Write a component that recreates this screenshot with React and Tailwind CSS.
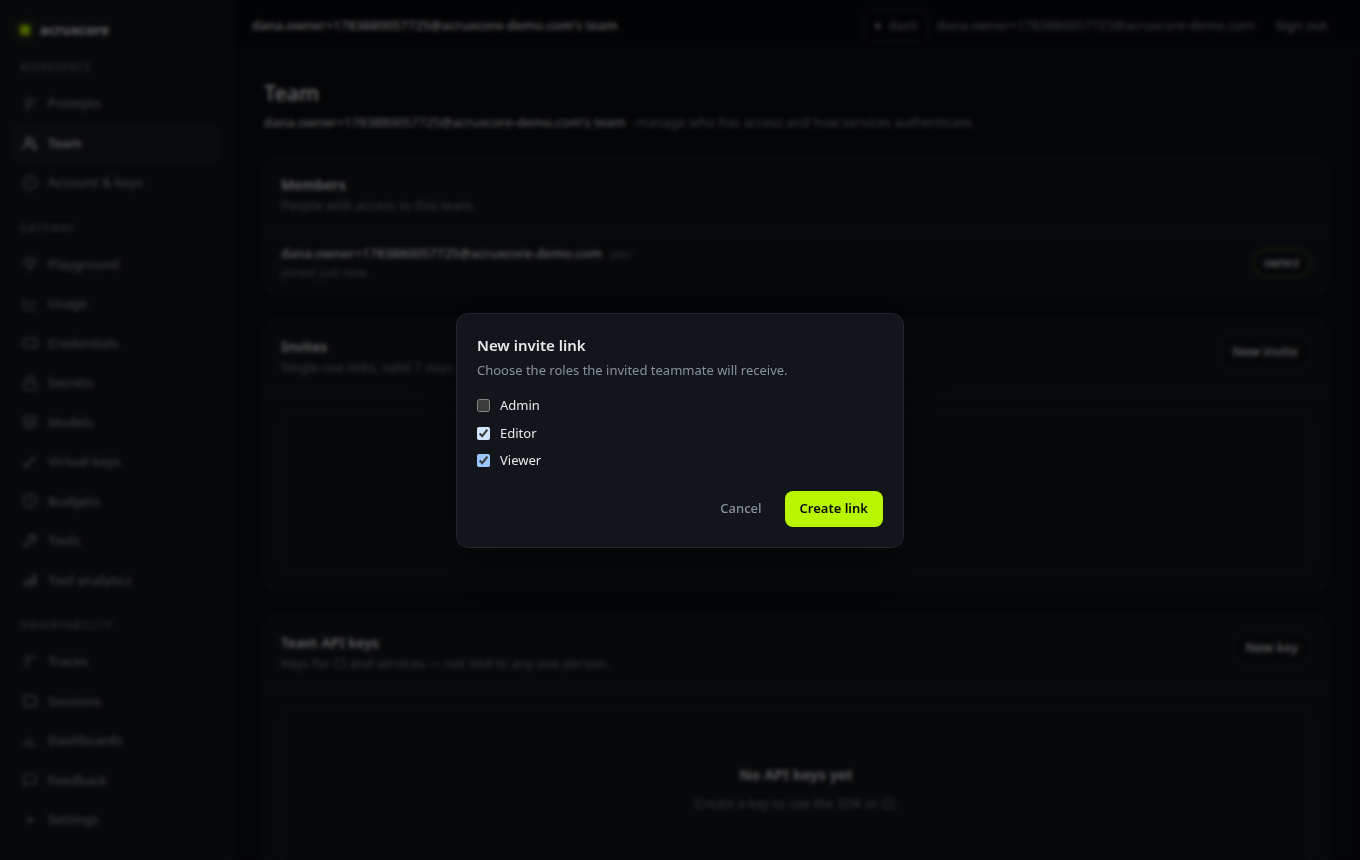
import {
  LuCircleCheck, LuGem, LuChartLine, LuLock, LuLayers, LuClock4, LuWrench, LuMessageSquare,
} from "react-icons/lu";

function Icon({ children }) {
  return (
    <svg className="size-4 shrink-0" viewBox="0 0 16 16" fill="none" stroke="currentColor" strokeWidth="1.3" strokeLinecap="round" strokeLinejoin="round">
      {children}
    </svg>
  );
}

const lucide = "size-4 shrink-0 stroke-[1.8]";

const sections = [
  {
    title: "Workspace",
    items: [
      { name: "Prompts", icon: <Icon><path d="M3 3.500h10M3 8h9M3 12.500h5" /></Icon> },
      { name: "Team", active: true, icon: <Icon><circle cx="6" cy="5" r="2.300" /><path d="M1.500 14c0-3 2-4.500 4.500-4.500s4.500 1.500 4.500 4.500M11.500 2.700v6.300M12 10c1.500.5 2.500 2 2.500 4h-2" /></Icon> },
      { name: "Account & keys", icon: <LuCircleCheck className={lucide} /> },
    ],
  },
  {
    title: "Gateway",
    items: [
      { name: "Playground", icon: <LuGem className="size-4 shrink-0 stroke-[1.2]" /> },
      { name: "Usage", icon: <LuChartLine className={lucide} /> },
      { name: "Credentials", icon: <Icon><rect x="1" y="4" width="14" height="8" rx="2" /></Icon> },
      { name: "Secrets", icon: <LuLock className={lucide} /> },
      { name: "Models", icon: <LuLayers className={lucide} /> },
      { name: "Virtual keys", icon: <Icon><circle cx="4.500" cy="11.500" r="1.800" /><path d="M6 10l6.500-6.500M10 4l3 2.500" /></Icon> },
      { name: "Budgets", icon: <LuClock4 className={lucide} /> },
      { name: "Tools", icon: <LuWrench className={lucide} /> },
      { name: "Tool analytics", icon: <Icon><path d="M3.500 13v-3M8 13V7M12.500 13V3" strokeWidth="2.600" /></Icon> },
    ],
  },
  {
    title: "Observability",
    items: [
      { name: "Traces", icon: <Icon><path d="M3 3.500h10M3 8h5M3 12.500h3" /></Icon> },
      { name: "Sessions", icon: <Icon><rect x="2" y="3" width="12" height="10" rx="1" /></Icon> },
      { name: "Dashboards", icon: <Icon><path d="M2.500 13V9M6.500 13V5M10 13V8M12 13h1" /></Icon> },
      { name: "Feedback", icon: <LuMessageSquare className={lucide} /> },
      { name: "Settings", icon: <Icon><circle cx="8" cy="8" r="2" /></Icon> },
    ],
  },
];

const roles = [
  { name: "Admin", checked: false, accent: "" },
  { name: "Editor", checked: true, accent: "accent-[#d1e6ff]" },
  { name: "Viewer", checked: true, accent: "accent-[#99c8ff]" },
];

function Sidebar() {
  return (
    <aside className="w-[232px] shrink-0 border-r border-[#1f242c] bg-[#12161c] px-3 pt-[19px]">
      <div className="flex items-center gap-2.5 px-2 pb-px text-sm leading-normal font-bold">
        <span className="size-2.5 rounded-xs bg-[#b8f500] shadow-[0_0_12px_#b8f50080]" />
        acruxcore
      </div>
      {sections.map((section) => (
        <nav key={section.title} className="pt-[19px]" aria-label={section.title}>
          <div className="mb-2.5 px-2 text-[10px] leading-[15px] font-medium tracking-[0.14em] text-[#6b7280] uppercase">
            {section.title}
          </div>
          <div className="flex flex-col gap-0.5">
            {section.items.map((item) => (
              <a
                key={item.name}
                href="#"
                className={`flex items-center gap-2.5 rounded-lg px-2.5 py-[9px] text-[13px] leading-normal font-medium ${
                  item.active ? "bg-[#191d24] text-[#e6e8eb]" : "text-[#8a919e]"
                }`}
              >
                {item.icon}
                {item.name}
              </a>
            ))}
          </div>
        </nav>
      ))}
    </aside>
  );
}

function Topbar() {
  return (
    <header className="flex h-[52px] items-center justify-between border-b border-[#1f242c] bg-[#07090e] px-5">
      <span className="font-medium">dana.owner+1783880057725@acruxcore-demo.com's team</span>
      <div className="flex items-center gap-2">
        <button className="flex h-8 items-center gap-2 rounded-lg border border-[#272d37] px-2.5 font-['Noto_Sans_Mono','DejaVu_Sans_Mono',monospace] text-xs text-[#8a919e]">
          <span className="size-1.5 rounded-full bg-[#7d8490]" />
          dark
        </button>
        <span className="text-[#8a919e]">dana.owner+1783880057725@acruxcore-demo.com</span>
        <button className="h-8 rounded-lg px-[13px] font-medium text-[#8a919e]">Sign out</button>
      </div>
    </header>
  );
}

function Card({ title, text, action, children }) {
  return (
    <section className="rounded-xl border border-[#1f242c] bg-[#12161c]">
      <div className="flex items-start justify-between border-b border-[#1f242c] p-4">
        <div>
          <h2 className="text-sm leading-normal font-semibold">{title}</h2>
          <p className="mt-px leading-[19px] text-[#7d8490]">{text}</p>
        </div>
        {action && (
          <button className="h-8 rounded-lg border border-[#1f242c] bg-[#0f1318] px-3 font-medium">{action}</button>
        )}
      </div>
      {children}
    </section>
  );
}

function Empty({ title, text }) {
  return (
    <div className="p-4">
      <div className="flex flex-col items-center gap-2 rounded-xl border border-dashed border-[#272d37] py-14">
        <h3 className="text-[15px] leading-normal font-semibold">{title}</h3>
        <p className="text-[#7d8490]">{text}</p>
      </div>
    </div>
  );
}

function InviteDialog() {
  return (
    <div className="fixed inset-0 flex items-center justify-center bg-black/60 backdrop-blur-[2px]">
      <form
        role="dialog"
        aria-labelledby="invite-title"
        className="w-full max-w-md rounded-xl border border-[#1f2630] bg-[#12161a] p-5 shadow-[0_20px_60px_rgba(0,0,0,0.5)]"
      >
        <h2 id="invite-title" className="text-[15px] leading-normal font-semibold">New invite link</h2>
        <p className="mt-1 leading-5 text-[#8a919e]">Choose the roles the invited teammate will receive.</p>
        <div className="mt-4 flex flex-col gap-2">
          {roles.map((role) => (
            <label key={role.name} className="flex items-center gap-2.5">
              <input type="checkbox" defaultChecked={role.checked} className={`size-[13px] ${role.accent}`} />
              {role.name}
            </label>
          ))}
        </div>
        <div className="mt-5 flex justify-end gap-2">
          <button type="button" className="h-9 rounded-lg px-[15px] font-medium text-[#8a919e]">Cancel</button>
          <button type="button" className="h-9 rounded-lg bg-[#b8f500] px-[15px] font-semibold text-[#0a0c0f]">Create link</button>
        </div>
      </form>
    </div>
  );
}

export default function App() {
  return (
    <div className="flex h-screen overflow-hidden bg-[#0a0d13] font-['Noto_Sans',sans-serif] text-[13px] leading-normal text-[#e6e8eb] scheme-dark">
      <Sidebar />
      <div className="min-w-0 flex-1">
        <Topbar />
        <main className="px-8 py-6">
          <h1 className="text-[21px] leading-[34px] font-semibold">Team</h1>
          <p className="mt-[3px] text-[#8a919e]">
            <span className="text-[#e6e8eb]">dana.owner+1783880057725@acruxcore-demo.com's team</span> · manage who has access and how services authenticate.
          </p>
          <div className="mt-6 flex flex-col gap-6">
            <Card title="Members" text="People with access to this team.">
              <div className="flex items-center justify-between px-4 py-3">
                <div>
                  <div>
                    <span className="font-medium">dana.owner+1783880057725@acruxcore-demo.com</span>
                    <span className="ml-2 text-xs text-[#6b7280]">you</span>
                  </div>
                  <div className="mt-px text-xs leading-normal text-[#6b7280]">joined just now</div>
                </div>
                <span className="rounded-full border border-[#b8f50066] bg-[#0f1318] px-2.5 py-1 font-['Noto_Sans_Mono','DejaVu_Sans_Mono',monospace] text-xs leading-normal font-medium">
                  owner
                </span>
              </div>
            </Card>
            <Card title="Invites" text="Single-use links, valid 7 days. Share them securely." action="New invite">
              <Empty title="No pending invites" text="Create a link to invite a teammate." />
            </Card>
            <Card title="Team API keys" text="Keys for CI and services — not tied to any one person." action="New key">
              <Empty title="No API keys yet" text="Create a key to use the SDK or CI." />
            </Card>
          </div>
        </main>
      </div>
      <InviteDialog />
    </div>
  );
}
